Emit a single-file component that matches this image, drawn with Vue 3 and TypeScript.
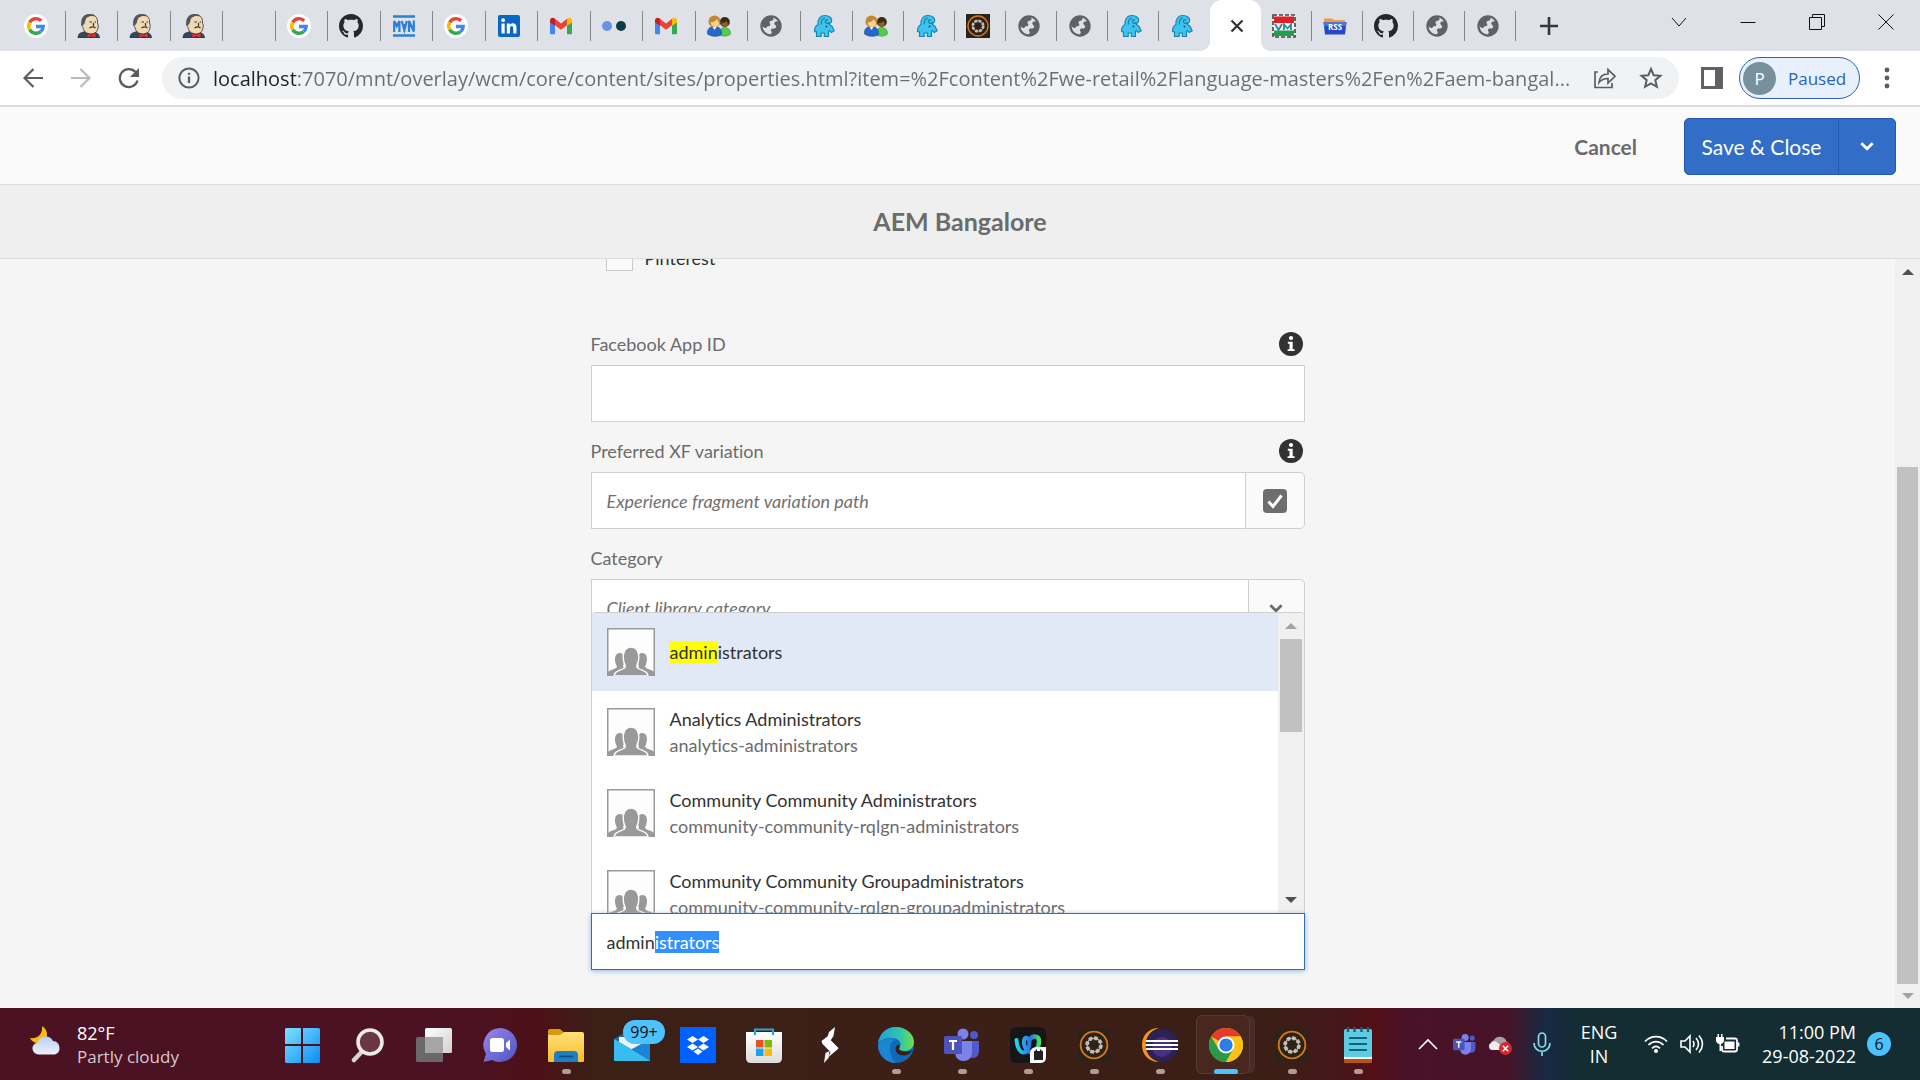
<script setup lang="ts">
import { onMounted, ref } from 'vue'

interface Tab { icon: string; label: string; active?: boolean }
interface Authorizable { name: string; id?: string }
interface TaskItem { icon: string; label: string; running?: boolean; active?: boolean; badge?: string }

const tab = (icon: string, label: string, active = false): Tab => ({ icon, label, active })

const tabs: Tab[] = [
  tab('google', 'Google'), tab('jenkins', 'Jenkins'), tab('jenkins', 'Jenkins'), tab('jenkins', 'Jenkins'),
  tab('', 'Untitled'), tab('google', 'Google'), tab('github', 'GitHub'), tab('mvn', 'Maven repository'),
  tab('google', 'Google'), tab('linkedin', 'LinkedIn'), tab('gmail', 'Gmail'), tab('dots', 'Medium'),
  tab('gmail', 'Gmail'), tab('people', 'Groups'), tab('globe', 'Page'), tab('mammoth', 'Mammoth'),
  tab('people', 'Groups'), tab('mammoth', 'Mammoth'), tab('aem', 'AEM'), tab('globe', 'Page'),
  tab('globe', 'Page'), tab('mammoth', 'Mammoth'), tab('mammoth', 'Mammoth'), tab('close', 'AEM Bangalore', true),
  tab('vm', 'VM'), tab('rss', 'Feeds'), tab('github', 'GitHub'), tab('globe', 'Page'), tab('globe', 'Page'),
]

const url = 'localhost:7070/mnt/overlay/wcm/core/content/sites/properties.html?item=%2Fcontent%2Fwe-retail%2Flanguage-masters%2Fen%2Faem-bangal...'

const suggestions: Authorizable[] = [
  { name: 'Analytics Administrators', id: 'analytics-administrators' },
  { name: 'Community Community Administrators', id: 'community-community-rqlgn-administrators' },
  { name: 'Community Community Groupadministrators', id: 'community-community-rqlgn-groupadministrators' },
]

const tasks: TaskItem[] = [
  { icon: 'windows', label: 'Start' },
  { icon: 'search', label: 'Search' },
  { icon: 'taskview', label: 'Task view' },
  { icon: 'chat', label: 'Chat' },
  { icon: 'explorer', label: 'File Explorer', running: true },
  { icon: 'mail', label: 'Mail', badge: '99+' },
  { icon: 'dropbox', label: 'Dropbox' },
  { icon: 'store', label: 'Microsoft Store' },
  { icon: 'bolt', label: 'Shortcut' },
  { icon: 'edge', label: 'Edge', running: true },
  { icon: 'teams', label: 'Teams', running: true },
  { icon: 'webex', label: 'Webex', running: true },
  { icon: 'aem', label: 'AEM author', running: true },
  { icon: 'eclipse', label: 'Eclipse', running: true },
  { icon: 'chrome', label: 'Chrome', running: true, active: true },
  { icon: 'aem', label: 'AEM publish', running: true },
  { icon: 'notepad', label: 'Notepad', running: true },
]

const typed = 'admin'
const member = ref('administrators')
const memberInput = ref<HTMLInputElement | null>(null)

onMounted(() => {
  const el = memberInput.value
  if (!el) return
  el.focus({ preventScroll: true })
  el.setSelectionRange(typed.length, member.value.length)
})
</script>

<template>
  <div class="desktop">
    <svg class="sprite" width="0" height="0" aria-hidden="true">
      <defs>
        <linearGradient id="gWin" x1="0" y1="0" x2="1" y2="1"><stop offset="0" stop-color="#7fe0ff" /><stop offset="1" stop-color="#0a8cf5" /></linearGradient>
        <linearGradient id="gChat" x1="0" y1="0" x2="1" y2="1"><stop offset="0" stop-color="#9a86e8" /><stop offset="1" stop-color="#4a55c8" /></linearGradient>
        <linearGradient id="gFolder" x1="0" y1="0" x2="0" y2="1"><stop offset="0" stop-color="#ffe07a" /><stop offset="1" stop-color="#f9bd28" /></linearGradient>
        <linearGradient id="gMail" x1="0" y1="0" x2="1" y2="1"><stop offset="0" stop-color="#35c3f0" /><stop offset="1" stop-color="#1a7ad0" /></linearGradient>
        <linearGradient id="gEdgeTop" x1="0" y1="0" x2="1" y2="0"><stop offset="0" stop-color="#1f9fd8" /><stop offset=".6" stop-color="#2fc4b0" /><stop offset="1" stop-color="#6fe04a" /></linearGradient>
        <linearGradient id="gCloud" x1="0" y1="0" x2="0" y2="1"><stop offset="0" stop-color="#b6cdf5" /><stop offset="1" stop-color="#eef2f8" /></linearGradient>
        <linearGradient id="gStore" x1="0" y1="0" x2="0" y2="1"><stop offset="0" stop-color="#ffffff" /><stop offset="1" stop-color="#dcdcdc" /></linearGradient>
        <linearGradient id="gView" x1="0" y1="0" x2="1" y2="1"><stop offset="0" stop-color="#ffffff" /><stop offset="1" stop-color="#d2d0d0" /></linearGradient>
        <linearGradient id="gWebexL" x1="0" y1="0" x2="1" y2="0"><stop offset="0" stop-color="#20d8e8" /><stop offset="1" stop-color="#2a6cf0" /></linearGradient>
        <linearGradient id="gWebexR" x1="0" y1="0" x2="1" y2="0"><stop offset="0" stop-color="#2a6cf0" /><stop offset="1" stop-color="#45e060" /></linearGradient>
      </defs>
      <symbol id="i-google" viewBox="0 0 24 24">
        <circle cx="12" cy="12" r="12" fill="#fff" />
        <g fill="none" stroke-width="3.4">
          <path d="M17.200 6.800A7.300 7.300 0 0 0 5.700 8.300" stroke="#ea4335" />
          <path d="M5.700 8.300a7.300 7.300 0 0 0 0 7.400" stroke="#fbbc05" />
          <path d="M5.700 15.700a7.300 7.300 0 0 0 11 1.900" stroke="#34a853" />
          <path d="M16.700 17.600c1.700-1.500 2.500-3.300 2.500-5.100H12" stroke="#4285f4" />
        </g>
      </symbol>
      <symbol id="i-jenkins" viewBox="0 0 24 24">
        <path d="M1 24c0-3 1-5 4-5.500l3-1 8 1 3 .5c2 .6 3.500 2 3.500 5z" fill="#2f4a5c" stroke="#222" stroke-width=".6" />
        <path d="M6 6c0-4 3-5.500 7-5.500 5 0 8 3 7.500 8.500 1 2 .8 4 .2 6-1 4-4 5-7 5C9 20 6.500 17 6 13 4 12 4.500 9 6 9z" fill="#f2d9b6" stroke="#333" stroke-width=".8" />
        <path d="M4.500 12C3 4 7 .2 12.500.3c3 0 5 .8 6 2.300-3-1-6.500-.8-8.500 1C8 5 8.500 9 6.800 10.500z" fill="#55565a" />
        <path d="M12.500 8H15M17.500 8H19M12.500 14c2-1.400 4.500-1.400 6 0M16.500 9v3" stroke="#333" stroke-width="1.200" fill="none" />
        <path d="M10 19l4.500 1.500L19 18.500V24l-4.500-1.500L10 24z" fill="#d23b3b" stroke="#6b1515" stroke-width=".6" />
      </symbol>
      <symbol id="i-github" viewBox="0 0 16 16">
        <path fill="#24292f" d="M8 0C3.580 0 0 3.580 0 8c0 3.540 2.290 6.530 5.470 7.590.4.070.55-.17.55-.38 0-.19-.01-.82-.01-1.490-2.010.37-2.530-.49-2.690-.94-.09-.23-.48-.94-.82-1.130-.28-.15-.68-.52-.01-.53.63-.01 1.080.58 1.230.82.72 1.210 1.870.87 2.330.66.070-.52.28-.87.51-1.070-1.780-.2-3.640-.89-3.640-3.950 0-.87.31-1.590.82-2.150-.08-.2-.36-1.020.08-2.120 0 0 .67-.21 2.200.82.64-.18 1.320-.27 2-.27s1.360.09 2 .27c1.530-1.040 2.200-.82 2.200-.82.44 1.100.16 1.920.08 2.120.51.56.82 1.270.82 2.150 0 3.070-1.870 3.750-3.650 3.950.29.25.54.73.54 1.480 0 1.070-.01 1.930-.01 2.200 0 .21.15.46.55.38A8.010 8.010 0 0 0 16 8c0-4.420-3.580-8-8-8z" />
      </symbol>
      <symbol id="i-mvn" viewBox="0 0 24 24">
        <path d="M1 2.500h22M1 21.500h22" stroke="#2a7fd8" stroke-width="2.600" />
        <path d="M2.200 18V7l2.600 5 2.600-5v11M9.800 7l2.600 9 2.400-9M12.400 10v8M17 18V7l4.800 10.500V6.500" fill="none" stroke="#2a7fd8" stroke-width="2.200" />
      </symbol>
      <symbol id="i-linkedin" viewBox="0 0 24 24">
        <rect x="1" y="1" width="22" height="22" rx="2" fill="#0a66c2" />
        <path d="M4.500 9.500h3.200v10H4.500zM9.800 9.500h3v1.400c1.400-2.400 6.700-2.500 6.700 2.400v6.200h-3.200v-5.300c0-3-3.300-2.700-3.300 0v5.300H9.800z" fill="#fff" />
        <circle cx="6.100" cy="6.200" r="1.900" fill="#fff" />
      </symbol>
      <symbol id="i-gmail" viewBox="0 0 24 24">
        <path d="M1 7v12c0 .8.500 1.300 1.300 1.300H6V10.500z" fill="#4285f4" />
        <path d="M23 7v12c0 .8-.5 1.300-1.300 1.300H18V10.500z" fill="#34a853" />
        <path d="M1 8.500V6.300C1 4 3.600 3 5.300 4.300L6 4.800v7z" fill="#c5221f" />
        <path d="M23 8.500V6.300C23 4 20.400 3 18.700 4.300l-.7.5v7z" fill="#fbbc04" />
        <path d="M6 4.800l6 4.600 6-4.600v6.400l-6 4.600-6-4.600z" fill="#ea4335" />
      </symbol>
      <symbol id="i-dots" viewBox="0 0 24 24">
        <circle cx="5" cy="12" r="5" fill="#6b90e8" /><circle cx="19" cy="12" r="5" fill="#123c44" />
      </symbol>
      <symbol id="i-people" viewBox="0 0 24 24">
        <path d="M12.500 21c-.5-5 1.500-7.500 5-7.500s6 2 6 6.500c-2 2.500-8 2.800-11 1z" fill="#55cc4c" stroke="#2e9a30" stroke-width=".6" />
        <circle cx="17.800" cy="8" r="5" fill="#3a2a14" /><path d="M14.500 9c2 0 4-1 5-2l1.500 3c0 3-5.500 4-6.500 1z" fill="#8a6224" />
        <path d="M.5 20C0 15 2.500 12.500 7.500 12.500s7.500 3 7 8c-3 2.500-10 2.500-14-.5z" fill="#2668c8" stroke="#174a98" stroke-width=".6" />
        <circle cx="7.500" cy="7.500" r="6" fill="#c8862c" /><path d="M3.500 8.500c3 0 5-1.500 6.500-3.500L12 9c0 5-7.500 5.500-8.500-.5z" fill="#f6d59c" />
        <path d="M5.500 13l2 3 2-3z" fill="#eef4ff" />
      </symbol>
      <symbol id="i-globe" viewBox="0 0 24 24">
        <circle cx="12" cy="12" r="9.600" fill="none" stroke="#5f6368" stroke-width="2.200" />
        <path d="M3 8.500L8 3.200l6-.8c-.5 1.500.8 1.800.5 3-.5 1.700-3.500.8-4 2.600-.3 1.500 1.300 2.200.7 3.500-.6 1-3.200.3-3.700 2-.2.900-2 1-5-2z" fill="#5f6368" />
        <path d="M15.500 8.500c1-1.500 3.500-1.600 5-1l1.500 5-1.500 5.500-5 3.500-5 .5c.5-1.600 2-1.800 2.300-3.200.2-1.300-1.300-2-.8-3.300.7-1.500 3-.6 4.500-1.500 1.200-.9.500-2.700-.5-3.300-.7-.5-1-1.200-.5-2.200z" fill="#5f6368" />
      </symbol>
      <symbol id="i-mammoth" viewBox="0 0 24 24">
        <path d="M4.500 22.500V18l-2-.5c0-3.500 1.500-6 3.500-7C5.500 4.500 8.500 1.500 13 1.500c4 0 6.700 2.300 6.700 5 0 2.200-1.700 3-3 2.500.3 1.200 1.600 2.400 3.300 3.200l2.200 4.600-3 1.700-1.700-2-1 .7v5.300h-4.200v-3.500H9.200v3.500z" fill="#3cc3ee" stroke="#1783ae" stroke-width="1.100" />
        <path d="M16.700 9c-1 .8-3.700.2-3.400-1.800.2-1.400 2-1.700 2.800-.8M9.500 10.500C9 7 10.500 4.500 13 4" fill="none" stroke="#1783ae" stroke-width="1.200" />
        <circle cx="14.500" cy="12.500" r="1" fill="#0f5878" />
      </symbol>
      <symbol id="i-aem" viewBox="0 0 24 24">
        <rect width="24" height="24" fill="#2b2218" />
        <circle cx="12" cy="12" r="10" fill="none" stroke="#d9771c" stroke-width="1.400" />
        <circle cx="12" cy="12" r="5.200" fill="none" stroke="#c9bdb3" stroke-width="2.800" stroke-dasharray="2.600 1.480" />
        <circle cx="12" cy="12" r="5.200" fill="none" stroke="#c9bdb3" stroke-width="1" />
      </symbol>
      <symbol id="i-close" viewBox="0 0 24 24"><path d="M6.500 6.500l11 11M17.500 6.500l-11 11" stroke="#2f3133" stroke-width="2.200" /></symbol>
      <symbol id="i-vm" viewBox="0 0 24 24">
        <rect x="1" y="1" width="22" height="22" fill="#f4f8f8" stroke="#444" stroke-width="1.600" stroke-dasharray="4 2" />
        <rect x="2" y="2.500" width="20" height="6.500" fill="#e01f26" /><rect x="2" y="16.500" width="20" height="5.500" fill="#1fa04e" />
        <path d="M3 10l3.500 6L10 10M12 16v-5.500l3.500 4 3.500-4V16" fill="none" stroke="#2c8a96" stroke-width="1.800" />
      </symbol>
      <symbol id="i-rss" viewBox="0 0 24 24">
        <path d="M1 8V4.500h8L11 6h11v3z" fill="#f59b3a" />
        <path d="M.5 8h23l-1.500 12.500H2z" fill="#2348c8" /><path d="M.5 8h23l-.5 4H1z" fill="#4a74e2" />
      </symbol>
      <symbol id="i-group" viewBox="0 0 48 48">
        <rect x=".75" y=".75" width="46.500" height="46.500" fill="#fdfdfd" stroke="#999" stroke-width="1.500" />
        <path d="M1 47v-3c3-3 8-2.500 9-5.500-3-5-3-13.500 2.500-13.500S18 33 16 38.500L19 42h10l3-3.500C30 33 30 25 35.500 25S41 33.500 38 38.500c1 3 6 2.500 9 5.500v3z" fill="#999" />
        <path d="M7 48c.5-5 5-5 9.500-7.500 2-1 2-2.500 1.500-3.500-2.500-5-3.500-18 6-18s8.500 13 6 18c-.5 1-.5 2.500 1.500 3.500C36 43 40.500 43 41 48z" fill="#999" stroke="#fdfdfd" stroke-width="1.400" />
      </symbol>
      <symbol id="i-windows" viewBox="0 0 36 36">
        <path d="M1 2.500Q1 1 2.500 1H17v16H1zM19 1h15.500Q36 1 36 2.500V17H19zM1 19h16v17H2.500Q1 36 1 34.500zM19 19h17v15.500q0 1.500-1.500 1.500H19z" fill="url(#gWin)" />
      </symbol>
      <symbol id="i-search" viewBox="0 0 36 36">
        <path d="M12.500 24L4 33" stroke="#d8d4d4" stroke-width="4.500" stroke-linecap="round" />
        <circle cx="20" cy="15" r="12" fill="#6a3644" stroke="#eceaea" stroke-width="3.600" />
      </symbol>
      <symbol id="i-taskview" viewBox="0 0 36 36">
        <rect x="9" y="1" width="27" height="25" rx="1.500" fill="url(#gView)" /><rect x="0" y="10" width="27" height="25" rx="1.500" fill="#6a6868" />
        <rect x="9" y="10" width="18" height="16" fill="#a6a5a5" />
      </symbol>
      <symbol id="i-chat" viewBox="0 0 36 36">
        <path d="M18 1a17 17 0 1 1-8 32L1.500 35 4 27A17 17 0 0 1 18 1z" fill="url(#gChat)" />
        <rect x="8" y="11" width="14" height="14" rx="2.500" fill="#fff" /><path d="M24 16l4-3.500v11L24 20z" fill="#fff" />
      </symbol>
      <symbol id="i-explorer" viewBox="0 0 36 36">
        <path d="M0 4q0-2 2-2h10l3.500 3V12H0z" fill="#d99a12" /><path d="M0 8h12l4-3h18q2 0 2 2v27q0 1-1 1H1q-1 0-1-1z" fill="url(#gFolder)" />
        <path d="M6 35V28q0-4 4-4h16q4 0 4 4v7z" fill="#1b7fc4" /><path d="M11 29.500h14" stroke="#0e5088" stroke-width="1.800" />
      </symbol>
      <symbol id="i-mail" viewBox="0 0 36 36">
        <path d="M0 12L18 1l18 11v8H0z" fill="#1565b5" /><path d="M5 10h26v12H5z" fill="#f0f4f8" />
        <path d="M0 12l36 21q0 1-1 1H1q-1 0-1-1z" fill="url(#gMail)" /><path d="M36 12L18 22l18 12z" fill="#1c84d6" /><path d="M0 12l18 10.500L36 34H1q-1 0-1-1z" fill="#37bdf0" />
      </symbol>
      <symbol id="i-dropbox" viewBox="0 0 36 36">
        <rect width="36" height="36" fill="#0061fe" />
        <path d="M12.500 9L18 12.500 12.500 16 7 12.500zM23.500 9l5.500 3.500L23.500 16 18 12.500zM12.500 16.500L18 20l-5.500 3.500L7 20zM23.500 16.500L29 20l-5.500 3.500L18 20zM18 21.500l4.500 3L18 28l-4.500-3.500z" fill="#fff" />
      </symbol>
      <symbol id="i-store" viewBox="0 0 36 36">
        <path d="M0 5h36v26q0 5-5 5H5q-5 0-5-5z" fill="url(#gStore)" /><path d="M9 8V2.500h18V8" fill="none" stroke="#2aa6d8" stroke-width="2.200" />
        <path d="M10 13h7.500v7.500H10z" fill="#e8502a" /><path d="M18.500 13H26v7.500h-7.500z" fill="#7db90f" /><path d="M10 21.500h7.500V29H10z" fill="#14a5ee" /><path d="M18.500 21.500H26V29h-7.500z" fill="#fbb90f" />
      </symbol>
      <symbol id="i-bolt" viewBox="0 0 36 36"><path d="M23 0L17 5l-1.500 5 3 3.500L21.500 9zM16 9l-6.500 5 1 3 8 8-2 5 9.500-8 .5-1-9-9zM12 36l1.500-10 4-2-1 7z" fill="#fff" /></symbol>
      <symbol id="i-edge" viewBox="0 0 36 36">
        <circle cx="18" cy="18" r="18" fill="#1268b8" />
        <path d="M0 17C1 7 8 0 18 0s18 7 18 15c0 5-4 9-9 9-4 0-6-1.500-6-2.500s1.500-1.500 1.500-4.500S19 11 13.500 11 2 13 0 17z" fill="url(#gEdgeTop)" />
        <path d="M12 20c0-4 3-7 6-7-7-3-15 0-18 5 0 10 8 18 18 18-4-3-6-9-6-16z" fill="#1a86d2" />
        <path d="M21 21.500c0 3 9 4.500 13.500 1.500-2 3.500-5 5.500-9 5.500-7 0-9.500-6-7-9.500 2-2.500 4.500-.5 2.500 2.500z" fill="#3a1f15" />
      </symbol>
      <symbol id="i-teams" viewBox="0 0 36 36">
        <circle cx="19" cy="7" r="5.500" fill="#7b83eb" /><circle cx="30" cy="8" r="4" fill="#5059c9" />
        <path d="M24 14h11v11q-1 6-6 6t-6-5z" fill="#5059c9" /><path d="M11 14h17v12q-1 8-8.500 8T11 26z" fill="#7b83eb" />
        <rect x="0" y="9" width="18" height="18" rx="1.500" fill="#4b53bc" /><path d="M5 14h8M9 14v9" stroke="#fff" stroke-width="2.200" />
      </symbol>
      <symbol id="i-webex" viewBox="0 0 36 36">
        <rect width="36" height="36" rx="6" fill="#161616" />
        <path d="M20 12c3-4 9-3 9 2 0 6-3 11-6.500 11" fill="none" stroke="url(#gWebexR)" stroke-width="4.500" stroke-linecap="round" />
        <path d="M6.500 13c.5 8 4 12.500 7 12.500 4 0 6-6 6-10S16 9 14.500 12c-1.500 4 .5 13 7 13.500" fill="none" stroke="url(#gWebexL)" stroke-width="4" stroke-linecap="round" />
        <path d="M20 27q0-7 7-7h9v10q0 6-6 6H20z" fill="#fff" /><path d="M24 24h9v9h-9zM25.500 22.500h1.500V25h-1.500zM30 22.500h1.500V25H30z" fill="#222" />
      </symbol>
      <symbol id="i-eclipse" viewBox="0 0 36 36">
        <path d="M17 1C7 1 0 8 0 18s7 17 17 17C8 32 4 26 4 18S8 4 17 1z" fill="#f7941e" />
        <circle cx="20" cy="18" r="16.500" fill="#2c2255" /><circle cx="20" cy="20" r="10" fill="#4a2f82" />
        <path d="M4 14h32M3.500 18h32.500M4 22h32" stroke="#fff" stroke-width="2.200" />
      </symbol>
      <symbol id="i-chrome" viewBox="0 0 36 36">
        <circle cx="18" cy="18" r="17" fill="#fbc116" />
        <path d="M18 18L3.300 9.500A17 17 0 0 1 32.700 9.500H18z" fill="#e33b2e" /><path d="M3.300 9.500A17 17 0 0 0 18 35l7.300-12.800L18 18l-7.300 4.200z" fill="#2a9a4a" />
        <path d="M32.700 9.500H18v8.500l7.300 4.200L18 35A17 17 0 0 0 32.700 9.500z" fill="#fbc116" />
        <circle cx="18" cy="18" r="8.500" fill="#fff" /><circle cx="18" cy="18" r="6.600" fill="#2f7de9" />
      </symbol>
      <symbol id="i-notepad" viewBox="0 0 36 36">
        <rect x="4" y="31" width="28" height="5" rx="1" fill="#b3560f" /><rect x="4" y="29" width="28" height="3" fill="#f2f2f2" />
        <rect x="4" y="2" width="28" height="28" rx="1.500" fill="#5ecbe2" />
        <path d="M9 11h18M9 17h18M9 23h18" stroke="#11647c" stroke-width="1.800" /><path d="M8 0v5M14.500 0v5M21.500 0v5M28 0v5" stroke="#11647c" stroke-width="2.400" />
      </symbol>
      <symbol id="i-info" viewBox="0 0 24 24">
        <circle cx="12" cy="12" r="12" fill="#323232" /><circle cx="12" cy="6" r="2.100" fill="#fff" />
        <path d="M8.800 9.800h4.900v7.400h1.900v1.900H8.600v-1.900h1.900v-5.500H8.800z" fill="#fff" />
      </symbol>
      <symbol id="i-chevron" viewBox="0 0 16 16"><path d="M3 5.500l5 5 5-5" fill="none" stroke="currentColor" stroke-width="2.400" /></symbol>
    </svg>

    <header class="browser">
      <div class="strip">
        <div class="tabs" role="tablist">
          <button v-for="(t, i) in tabs" :key="i" type="button" role="tab" class="tab" :class="{ active: t.active }" :aria-selected="t.active" :aria-label="t.label">
            <svg v-if="t.icon" width="24" height="24"><use :href="'#i-' + t.icon" /></svg>
            <span v-if="t.icon === 'rss'" class="rss">RSS</span>
          </button>
          <button type="button" class="add" aria-label="New tab">
            <svg width="18" height="18" viewBox="0 0 18 18"><path d="M9 0v18M0 9h18" stroke="#35373a" stroke-width="2.600" /></svg>
          </button>
        </div>
        <div class="caption">
          <button type="button" aria-label="Search tabs"><svg width="16" height="16" viewBox="0 0 16 16"><path d="M1 4l7 8 7-8" class="thin" /></svg></button>
          <button type="button" aria-label="Minimize"><svg width="16" height="16" viewBox="0 0 16 16"><path d="M.5 8.500h15" class="thin" /></svg></button>
          <button type="button" aria-label="Restore"><svg width="16" height="16" viewBox="0 0 16 16"><path d="M.5 3.500h12v12H.5zM3.500 3.500v-3h12v12h-3" class="thin" /></svg></button>
          <button type="button" aria-label="Close"><svg width="16" height="16" viewBox="0 0 16 16"><path d="M.5.5l15 15M15.500.5l-15 15" class="thin" /></svg></button>
        </div>
      </div>

      <div class="toolbar">
        <button type="button" class="nav" aria-label="Back"><svg width="20" height="20" viewBox="0 0 20 20"><path d="M20 10H2M10.500 1L1.500 10l9 9" fill="none" stroke="#5a5d61" stroke-width="2.200" /></svg></button>
        <button type="button" class="nav" aria-label="Forward"><svg width="20" height="20" viewBox="0 0 20 20"><path d="M0 10h18M9.500 1l9 9-9 9" fill="none" stroke="#b8babc" stroke-width="2.200" /></svg></button>
        <button type="button" class="nav" aria-label="Reload"><svg width="22" height="22" viewBox="0 0 22 22"><path d="M19.500 13.500A9 9 0 1 1 17.500 5" fill="none" stroke="#5a5d61" stroke-width="2.300" /><path d="M21 1v9h-9z" fill="#5a5d61" /></svg></button>
        <div class="omnibox">
          <svg class="site" width="22" height="22" viewBox="0 0 22 22"><circle cx="11" cy="11" r="9.600" fill="none" stroke="#5a5d61" stroke-width="2" /><path d="M11 9.500V16M11 5.800v2" stroke="#5a5d61" stroke-width="2.300" /></svg>
          <input class="url" type="text" :value="url" aria-label="Address" spellcheck="false" />
          <button type="button" class="inbar" aria-label="Share"><svg width="24" height="24" viewBox="0 0 24 24"><path d="M5 6H2v15.500h17V17M6 16.500c.5-5.500 4-8.500 9-8.500V3.500l7 6.800-7 6.700v-4.500c-4 0-6.500 1-9 4z" fill="none" stroke="#5a5d61" stroke-width="1.700" /></svg></button>
          <button type="button" class="inbar" aria-label="Bookmark"><svg width="24" height="24" viewBox="0 0 24 24"><path d="M12 3l2.700 6.200 6.700.6-5.100 4.400 1.600 6.600L12 17.300l-5.900 3.500 1.600-6.600-5.100-4.400 6.700-.6z" fill="none" stroke="#5a5d61" stroke-width="2" /></svg></button>
        </div>
        <button type="button" class="nav side" aria-label="Side panel"><svg width="22" height="22" viewBox="0 0 22 22"><path d="M0 0h22v22H0zM3 3v16h11V3z" fill="#5f6165" fill-rule="evenodd" /></svg></button>
        <button type="button" class="profile"><span class="avatar">P</span>Paused</button>
        <button type="button" class="nav menu" aria-label="Menu"><svg width="6" height="22" viewBox="0 0 6 22"><circle cx="3" cy="3" r="2.400" fill="#5a5d61" /><circle cx="3" cy="11" r="2.400" fill="#5a5d61" /><circle cx="3" cy="19" r="2.400" fill="#5a5d61" /></svg></button>
      </div>
    </header>

    <div class="actions">
      <button type="button" class="cancel">Cancel</button>
      <div class="split">
        <button type="button" class="save">Save &amp; Close</button>
        <button type="button" class="more" aria-label="More save options"><svg width="18" height="18"><use href="#i-chevron" /></svg></button>
      </div>
    </div>
    <h1 class="title">AEM Bangalore</h1>

    <main class="pane">
      <form class="form" @submit.prevent>
        <label class="check"><input type="checkbox" />Pinterest</label>

        <div class="field">
          <div class="caption-row"><label for="fb">Facebook App ID</label><svg width="24" height="24"><use href="#i-info" /></svg></div>
          <input id="fb" class="box" type="text" />
        </div>
        <div class="field">
          <div class="caption-row"><label for="xf">Preferred XF variation</label><svg width="24" height="24"><use href="#i-info" /></svg></div>
          <div class="combo">
            <input id="xf" class="box" type="text" placeholder="Experience fragment variation path" />
            <button type="button" class="pick" aria-label="Select path"><svg width="24" height="24" viewBox="0 0 24 24"><rect width="24" height="24" rx="4" fill="#6e6e6e" /><path d="M5.500 12.500l4.500 5 8.500-11" fill="none" stroke="#fff" stroke-width="3" /></svg></button>
          </div>
        </div>
        <div class="field">
          <div class="caption-row"><label for="cat">Category</label></div>
          <div class="combo">
            <input id="cat" class="box" type="text" placeholder="Client library category" />
            <button type="button" class="pick drop" aria-label="Show categories"><svg width="18" height="18"><use href="#i-chevron" /></svg></button>
          </div>
        </div>

        <div class="member">
          <div class="popup">
            <ul class="list" role="listbox">
              <li class="option selected" role="option" aria-selected="true">
                <svg width="48" height="48"><use href="#i-group" /></svg>
                <div><mark>{{ typed }}</mark>istrators</div>
              </li>
              <li v-for="s in suggestions" :key="s.name" class="option" role="option" aria-selected="false">
                <svg width="48" height="48"><use href="#i-group" /></svg>
                <div>{{ s.name }}<div class="id">{{ s.id }}</div></div>
              </li>
            </ul>
            <div class="bar" aria-hidden="true"><i class="up faint"></i><b class="thumb short"></b><i class="down"></i></div>
          </div>
          <input ref="memberInput" v-model="member" class="box focus" type="text" aria-label="Add user or group" autocomplete="off" spellcheck="false" />
        </div>
      </form>
      <div class="bar page" aria-hidden="true"><i class="up"></i><b class="thumb"></b><i class="down faint"></i></div>
    </main>

    <footer class="taskbar">
      <button type="button" class="weather">
        <svg width="32" height="30" viewBox="0 0 32 30"><path d="M12 0c7 4 7 14-1 17-5 1-9-1-11-5C8 13 13 8 12 0z" fill="#fbb917" /><path d="M9 28.500a6 6 0 0 1-1-12 8 8 0 0 1 15-1.500 7 7 0 0 1 2 13.500z" fill="url(#gCloud)" /></svg>
        <span>82°F<small>Partly cloudy</small></span>
      </button>
      <div class="apps">
        <button v-for="t in tasks" :key="t.label" type="button" class="app" :class="{ running: t.running, current: t.active }" :aria-label="t.label">
          <svg :width="t.icon === 'aem' ? 32 : 36" :height="t.icon === 'aem' ? 32 : 36"><use :href="'#i-' + t.icon" /></svg>
          <span v-if="t.badge" class="count">{{ t.badge }}</span>
        </button>
      </div>
      <div class="tray">
        <button type="button" class="tick" aria-label="Show hidden icons"><svg width="20" height="12" viewBox="0 0 20 12"><path d="M1 11l9-9 9 9" fill="none" stroke="#fff" stroke-width="1.600" /></svg></button>
        <button type="button" class="tick" aria-label="Teams"><svg width="23" height="23"><use href="#i-teams" /></svg></button>
        <button type="button" class="tick" aria-label="OneDrive"><svg width="24" height="24" viewBox="0 0 24 24"><path d="M5 17a5 5 0 0 1 1-9 7 7 0 0 1 12.500 1.500A4.500 4.500 0 0 1 18 18z" fill="#a8a0a6" /><path d="M3.500 18a4 4 0 0 1 0-7.500q3-3 7 1l7 6.500z" fill="#f0ecee" /><circle cx="17.500" cy="16.500" r="6.500" fill="#d9252f" /><path d="M14.800 13.800l5.400 5.400M20.200 13.800l-5.400 5.400" stroke="#fff" stroke-width="1.500" /></svg></button>
        <button type="button" class="tick mic" aria-label="Microphone"><svg width="18" height="24" viewBox="0 0 18 24"><rect x="5.500" y="1" width="7" height="14" rx="3.500" fill="none" stroke="#86dcec" stroke-width="1.700" /><path d="M1 11c0 11 16 11 16 0M9 19.500V24" fill="none" stroke="#86dcec" stroke-width="1.700" /></svg></button>
        <button type="button" class="lang">ENG<br />IN</button>
        <button type="button" class="status" aria-label="Network, sound and battery">
          <svg width="24" height="18" viewBox="0 0 24 18"><path d="M1 6.500c6-6.500 16-6.500 22 0M4.500 10c4.500-4.500 10.500-4.500 15 0M8 13.300c2.500-2.300 5.500-2.300 8 0" fill="none" stroke="#fff" stroke-width="1.700" /><circle cx="12" cy="16" r="2" fill="#fff" /></svg>
          <svg width="24" height="20" viewBox="0 0 24 20"><path d="M1 7h4l5-5v16l-5-5H1zM13 7q2 3 0 6M16 4q5 6 0 12M19 1.500q7 8.500 0 17" fill="none" stroke="#fff" stroke-width="1.600" /></svg>
          <svg width="24" height="20" viewBox="0 0 24 20"><path d="M10 4.500h9q2 0 2 2v9q0 2-2 2H8q-2 0-2-2V12M22.500 8.500v4" fill="none" stroke="#fff" stroke-width="1.800" /><path d="M8.500 7.500h10v7.500h-10zM0 3h8v4q-1 3-3 3v7H3.500v-7Q1 10 0 7zM1.500 0H3v3H1.500zM5 0h1.500v3H5z" fill="#fff" /></svg>
        </button>
        <button type="button" class="clock">11:00 PM<br />29-08-2022</button>
        <span class="notes">6</span>
      </div>
    </footer>
  </div>
</template>

<style>
body { margin: 0; }
</style>

<style scoped>
.desktop {
  --ui: "Open Sans", "Noto Sans", sans-serif;
  --aem: Lato, "Noto Sans", sans-serif;
  display: flex;
  flex-direction: column;
  height: 100vh;
  overflow: hidden;
  font-family: var(--aem);
  font-size: 18px;
  font-variant-ligatures: none;
  color: #323232;
  background: #f5f5f5;
}
.desktop *, .desktop *::before, .desktop *::after { box-sizing: border-box; }
.sprite { position: absolute; }
svg { display: block; flex: none; }
button { margin: 0; padding: 0; border: 0; background: none; color: inherit; font: inherit; }
input { margin: 0; outline: 0; font: inherit; }

/* browser */
.browser { flex: none; font-family: var(--ui); border-bottom: 2px solid #dcdddf; background: #fff; }
.strip { display: flex; justify-content: space-between; height: 51px; background: #dee1e8; }
.tabs { display: flex; padding-left: 13px; }
.tab { position: relative; width: 51px; padding-left: 11px; display: flex; align-items: center; }
.tab:nth-child(-n + 16) { width: 52px; }
.tab:nth-child(-n + 16):nth-child(odd) { width: 53px; }
.tab::after { content: ""; position: absolute; right: 0; top: 11px; width: 1px; height: 30px; background: #85888d; }
.tab.active { background: #fff; border-radius: 12px 12px 0 0; padding-left: 15px; }
.tab.active::before, .tab.active::after { content: ""; position: absolute; top: auto; bottom: 0; width: 10px; height: 10px; }
.tab.active::before { left: -10px; background: radial-gradient(circle at 0 0, #dee1e8 10px, #fff 10px); }
.tab.active::after { right: -10px; background: radial-gradient(circle at 100% 0, #dee1e8 10px, #fff 10px); }
.tab:has(+ .active)::after { display: none; }
.rss { position: absolute; left: 11px; top: 22px; width: 24px; color: #fff; font-size: 8px; font-weight: 700; line-height: 10px; text-align: center; }
.add { display: flex; align-items: center; padding-left: 24px; }
.caption { display: flex; height: 44px; }
.caption button { width: 69px; display: grid; place-items: center; }
.thin { fill: none; stroke: #111; stroke-width: 1; }
.toolbar { display: flex; align-items: center; height: 54px; padding: 0 9px; }
.nav { width: 48px; height: 42px; display: grid; place-items: center; }
.omnibox { flex: 1; min-width: 0; display: flex; align-items: center; height: 42px; margin-left: 9px; padding: 0 16px; border-radius: 21px; background: #f0f2f4; }
.url {
  flex: 1; min-width: 0; height: 42px; margin-left: 13px; padding: 0; border: 0;
  font-size: 20px; color: transparent;
  background: linear-gradient(90deg, #202124 84px, #6a6d71 84px);
  background-clip: text; -webkit-background-clip: text;
}
.inbar { width: 47px; display: grid; place-items: center; }
.inbar + .inbar { width: 24px; margin-left: 11px; }
.side { width: 66px; }
.profile { display: flex; align-items: center; width: 121px; height: 42px; margin-left: -6px; padding-left: 3px; gap: 12px; border: 1px solid #2a62c0; border-radius: 21px; background: #e9f0fd; color: #2a62c0; font-size: 17px; }
.avatar { width: 33px; height: 33px; border-radius: 50%; background: #78909c; color: #fff; line-height: 33px; text-align: center; }
.menu { margin-left: 3px; }

/* page header */
.actions { flex: none; display: flex; justify-content: flex-end; align-items: center; gap: 47px; height: 78px; padding: 1px 24px 0 0; border-bottom: 1px solid #dedede; background: #fafafa; font-size: 21px; font-weight: 700; }
.cancel { color: #6b6b6b; }
.split { display: flex; height: 57px; border: 1px solid #2459b4; border-radius: 5px; overflow: hidden; background: #326ec8; color: #fff; font-weight: 400; }
.save { width: 153px; }
.more { width: 57px; display: grid; place-items: center; border-left: 1px solid #2459b4; }
.title { flex: none; margin: 0; height: 74px; border-bottom: 1px solid #dcdcdc; background: #efefef; color: #6b6b6b; font-size: 25px; font-weight: 700; line-height: 73px; text-align: center; }

/* form */
.pane { flex: 1; min-height: 0; display: flex; justify-content: center; overflow: hidden; }
.form { width: 714px; margin: -15px auto 0; }
.check { display: flex; align-items: center; gap: 12px; height: 27px; margin: 0 0 52px 15px; width: max-content; }
.check input { appearance: none; width: 27px; height: 27px; border: 1px solid #ccc; background: #fafafa; }
.field { margin-bottom: 8px; }
.caption-row { display: flex; justify-content: space-between; align-items: center; height: 42px; padding-right: 2px; color: #6b6b6b; }
.box { display: block; width: 100%; height: 57px; padding: 0 15px; border: 1px solid #cfcfcf; border-radius: 0; background: #fff; color: #323232; }
.box::placeholder { color: #707070; font-style: italic; opacity: 1; }
.combo { display: flex; }
.combo .box { flex: 1; min-width: 0; border-right: 0; }
.pick { width: 60px; display: grid; place-items: center; border: 1px solid #cfcfcf; border-radius: 0 5px 5px 0; background: #fafafa; color: #6b6b6b; }
.drop { width: 57px; }
.member { position: relative; margin-top: 277px; }
.popup { position: absolute; left: 0; right: 0; bottom: 100%; height: 301px; display: flex; border: 1px solid #cfcfcf; border-bottom: 0; border-radius: 5px 5px 0 0; overflow: hidden; background: #fff; }
.list { flex: 1; margin: 0; padding: 0; list-style: none; line-height: 26px; }
.option { display: flex; align-items: center; gap: 15px; height: 81px; padding-left: 15px; }
.option.selected { height: 78px; background: #e0e9f5; }
.id { color: #6b6b6b; }
mark { background: #ff0; color: inherit; }
.focus { position: relative; border-color: #326ebe; box-shadow: 0 1px 5px #8fb4e6; caret-color: transparent; }
.focus::selection { background: #3390ff; color: #fff; }

.bar { flex: none; width: 26px; padding: 0 2px; display: flex; flex-direction: column; background: #f0f0f0; }
.page { width: 25px; }
.up, .down { flex: none; height: 26px; display: grid; place-items: center; color: #505050; }
.page .down { height: 24px; }
.up::before, .down::before { content: ""; border: 6px solid transparent; }
.up::before { border-top: 0; border-bottom-color: currentColor; }
.down::before { border-bottom: 0; border-top-color: currentColor; }
.faint { color: #a3a3a3; }
.thumb { display: block; background: #c1c1c1; height: 69%; margin-top: auto; }
.short { height: 93px; margin: 0 0 auto; }

/* taskbar */
.taskbar {
  flex: none; display: flex; align-items: stretch; height: 72px;
  font-family: var(--ui); font-size: 18px; line-height: 24px; color: #fff;
  background: linear-gradient(90deg, #4a1222 0, #4a1222 24%, #4d1017 28%, #3b2016 31%, #3b1f16 66%, #47161a 70%, #521014 71.5%, #4a1226 73%, #471328 78.500%, #162a42 80.500%, #142d32 82.500%, #142d32 100%);
}
.weather { display: flex; align-items: center; gap: 15px; padding: 2px 0 0 30px; width: 268px; text-align: left; }
.weather svg { margin-bottom: 8px; }
.weather small { display: block; font-size: 17px; color: #d9c8cd; }
.apps { display: flex; padding-left: 1px; }
.app { position: relative; width: 66px; padding-top: 2px; display: grid; place-items: center; }
.app svg { position: relative; }
.running::after { content: ""; position: absolute; left: 50%; bottom: 6px; width: 9px; height: 5px; margin-left: -4px; border-radius: 3px; background: #b09c97; }
.current::before { content: ""; position: absolute; inset: 7px 9px 6px 3px; border: 1px solid #583a34; border-radius: 6px; background: #48271f; box-shadow: 6px 0 0 -1px #4b2c26; }
.current::after { width: 24px; margin-left: -12px; background: #4cc2ff; }
.count { position: absolute; left: 24px; top: 12px; width: 42px; height: 24px; border-radius: 12px; background: #4cc2ff; color: #111; font-size: 16px; line-height: 24px; text-align: center; }
.tray { display: flex; align-items: center; margin-left: auto; padding-right: 29px; }
.tick { width: 36px; display: grid; place-items: center; }
.mic { width: 48px; }
.lang { width: 66px; text-align: center; }
.status { display: flex; align-items: center; gap: 12px; margin-left: 12px; }
.clock { width: 116px; text-align: right; }
.notes { width: 24px; height: 24px; margin-left: 11px; border-radius: 50%; background: #4cc2ff; color: #111; font-size: 16px; text-align: center; }
</style>
